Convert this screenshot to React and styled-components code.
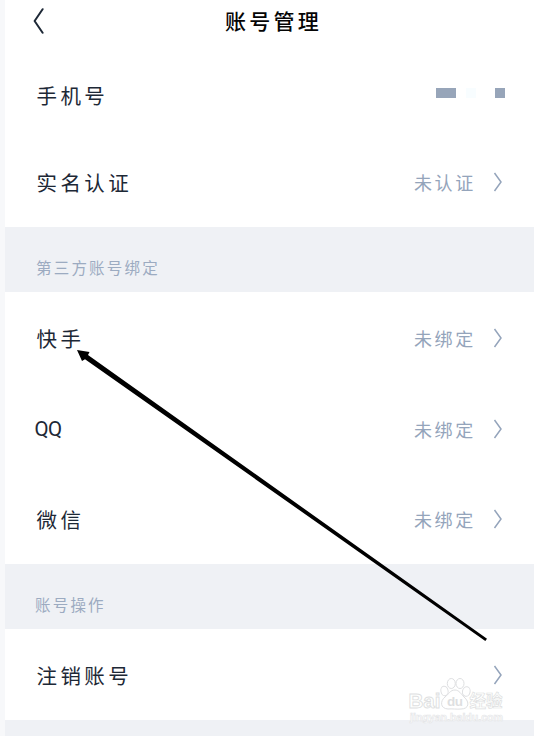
import React from "react";
import styled, { createGlobalStyle } from "styled-components";

const GlobalStyle = createGlobalStyle`
  * {
    box-sizing: border-box;
  }
  body {
    margin: 0;
    background-color: #f7f8fa;
    font-family: "Noto Sans CJK SC", sans-serif;
  }
`;
const Page = styled.div`
  position: relative;
  width: 534px;
  height: 736px;
  padding-left: 5px;
  overflow: hidden;
  background-color: #f7f8fa;
`;
const Header = styled.header`
  display: grid;
  grid-template-columns: 80px 1fr 80px;
  align-items: start;
  height: 52px;
  background-color: #ffffff;
`;
const BackButton = styled.button`
  display: flex;
  width: 14px;
  margin: 8px 0 0 27px;
  padding: 0;
  border: none;
  background: none;
`;
const Title = styled.h1`
  margin: 0 -8px 0 0;
  color: #050505;
  font-size: 21px;
  font-weight: 500;
  line-height: 40px;
  letter-spacing: 3.2px;
  text-align: center;
  white-space: nowrap;
`;
const Group = styled.section`
  background-color: #ffffff;
`;
const Row = styled.div`
  display: flex;
  align-items: center;
  height: ${({ $height }) => $height}px;
  padding: 0 31px;
`;
const Label = styled.span`
  flex: 1;
  color: #1d2836;
  font-family: ${({ $latin }) => ($latin ? "Roboto, sans-serif" : "inherit")};
  font-size: 20.5px;
  line-height: 30px;
  letter-spacing: ${({ $latin }) => ($latin ? "-0.6px" : "3.4px")};
  margin-left: ${({ $latin }) => ($latin ? "-1.5px" : "0.5px")};
`;
const Value = styled.span`
  margin-right: 17px;
  color: #94a4bb;
  font-size: 18px;
  line-height: 30px;
  letter-spacing: 2.7px;
`;
const SectionTitle = styled.div`
  height: 65px;
  padding: 28px 0 0 ${({ $left }) => $left}px;
  background-color: #eff1f5;
  color: #9cabc1;
  font-size: 15.5px;
  line-height: 24px;
  letter-spacing: 2.2px;
`;
const Spacer = styled.div`
  height: 2px;
`;
const Footer = styled.div`
  height: 16px;
  background-color: #eff1f5;
`;
const Mask = styled.div`
  display: flex;
  height: 10px;
  margin: -4px -2px 0 0;
`;
const MaskBlock = styled.span`
  width: ${({ $width }) => $width}px;
  background-color: ${({ $color }) => $color};
`;
const Arrow = styled.svg`
  position: absolute;
  left: 0;
  top: 0;
  pointer-events: none;
`;
const Watermark = styled.svg`
  position: absolute;
  left: 404px;
  top: 674px;
`;

const Chevron = () => (
  <svg width="10" height="20" viewBox="0 0 10 20" fill="none">
    <path d="M1.5 1L8 10L1.5 19" stroke="#94a4bb" strokeWidth="1.5" />
  </svg>
);

const Item = ({ label, value, height, latin }) => (
  <Row $height={height}>
    <Label $latin={latin}>{label}</Label>
    {value && <Value>{value}</Value>}
    <Chevron />
  </Row>
);

const App = () => {
  return (
    <>
      <GlobalStyle />
      <Page>
        <Header>
          <BackButton aria-label="返回">
            <svg width="14" height="26" viewBox="0 0 14 26" fill="none">
              <path
                d="M10.6 1.2L2.6 13L10.6 24.8"
                stroke="#1d2836"
                strokeWidth="2"
                strokeLinecap="round"
                strokeLinejoin="round"
              />
            </svg>
          </BackButton>
          <Title>账号管理</Title>
        </Header>

        <Group>
          <Row $height={86}>
            <Label>手机号</Label>
            {/* hidden phone number */}
            <Mask>
              <MaskBlock $width={20} $color="#97a5b9" />
              <MaskBlock $width={10} $color="#ffffff" />
              <MaskBlock $width={10} $color="#f8fdff" />
              <MaskBlock $width={19} $color="#ffffff" />
              <MaskBlock $width={10} $color="#97a5b9" />
            </Mask>
          </Row>
          <Item label="实名认证" value="未认证" height={87} />
          <Spacer />
        </Group>

        <SectionTitle $left={31}>第三方账号绑定</SectionTitle>
        <Group>
          <Item label="快手" value="未绑定" height={91} />
          <Item label="QQ" value="未绑定" height={91} latin />
          <Item label="微信" value="未绑定" height={90} />
        </Group>

        <SectionTitle $left={30}>账号操作</SectionTitle>
        <Group>
          <Item label="注销账号" height={91} />
        </Group>
        <Footer />

        <Watermark width="104" height="52" viewBox="0 0 104 52">
          <g fill="#ffffff" stroke="#dedfe1" strokeWidth="1">
            <ellipse cx="40.5" cy="17" rx="3.6" ry="4.8" transform="rotate(-12 40.5 17)" />
            <ellipse cx="47.3" cy="9.5" rx="4" ry="5" />
            <ellipse cx="56" cy="9.5" rx="4" ry="5" />
            <ellipse cx="62.3" cy="17.5" rx="3.8" ry="4.8" transform="rotate(12 62.3 17.5)" />
            <path d="M51 16C55 16 57 20 60 23C66 28 65 35 57 35C53 35.5 48 34.5 44 35C36 34.5 36 27 41 23C45 20 46 16 51 16Z" />
          </g>
          <g fill="#ffffff" stroke="#dedfe1" strokeWidth="0.9" fontWeight="700">
            <text
              x="4.5"
              y="33.5"
              fontFamily="Liberation Sans"
              fontSize="20.5"
              textLength="32"
              lengthAdjust="spacingAndGlyphs"
            >
              Bai
            </text>
            <text
              x="43"
              y="32"
              fontFamily="Liberation Sans"
              fontSize="13.5"
              textLength="16"
              fill="#dedfe1"
              stroke="none"
            >
              du
            </text>
            <text x="65.5" y="33" fontFamily="Noto Sans CJK SC" fontSize="16.5" strokeWidth="0.7">
              经验
            </text>
            <text
              x="6"
              y="47"
              fontFamily="Liberation Sans"
              fontSize="10"
              textLength="93"
              lengthAdjust="spacingAndGlyphs"
              stroke="#e4e5e7"
              strokeWidth="0.6"
            >
              jingyan.baidu.com
            </text>
          </g>
        </Watermark>

        {/* pointer towards the 快手 row */}
        <Arrow width="534" height="736" viewBox="0 0 534 736">
          <path
            d="M77 350L89.5 352L88 355L487 638.8L485.3 641L85 359.2L82 361Z"
            fill="#000000"
          />
        </Arrow>
      </Page>
    </>
  );
};

export default App;
